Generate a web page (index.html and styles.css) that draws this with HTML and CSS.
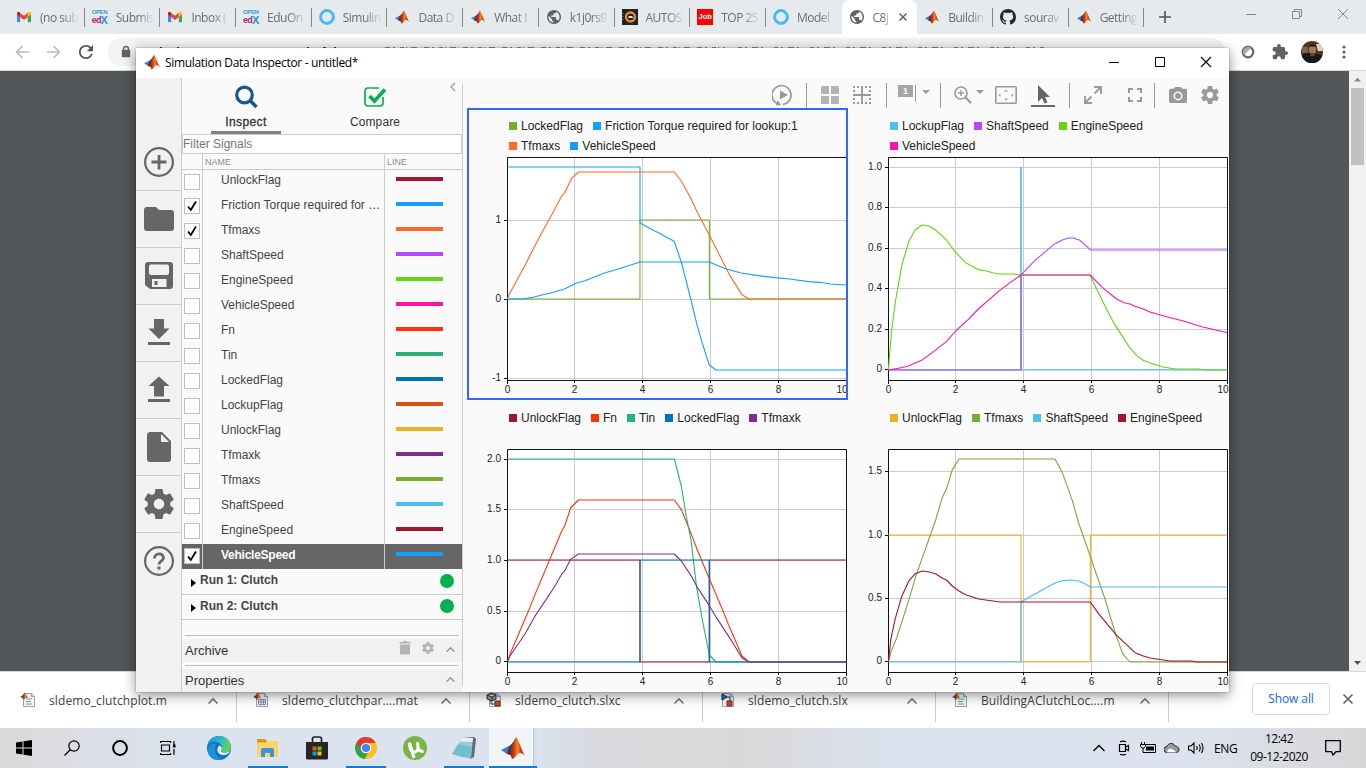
FILE: index.html
```html
<!DOCTYPE html>
<html lang="en">
<head>
<meta charset="utf-8">
<title>Simulation Data Inspector</title>
<link rel="stylesheet" href="styles.css">
</head>
<body>
<svg class="defs" width="0" height="0">
  <defs>
    <linearGradient id="flame" x1="0" x2="1"><stop offset="0" stop-color="#5a1010"/><stop offset=".35" stop-color="#c23318"/><stop offset=".6" stop-color="#f58a1f"/><stop offset=".75" stop-color="#d4401c"/><stop offset="1" stop-color="#b02010"/></linearGradient>
    <linearGradient id="edgeg" x1="0" y1="0" x2="1" y2=".4"><stop offset="0" stop-color="#1b8fd8"/><stop offset=".5" stop-color="#25b7d3"/><stop offset="1" stop-color="#5fd45a"/></linearGradient>
  </defs>
  <symbol id="matlab" viewBox="0 0 24 24"><path d="M0 14l8-4 3 3-5 5z" fill="#3f7fc0"/><path d="M8 10c3-1 5-6 7-8l-3 12-3 5-3-1z" fill="#2b3f78"/><path d="M15.500 1C13 3 12 10 6 18c3-1 4 2 5 5 4-1 5-6 8-6 2 0 3 1 5 3C21 15 18 5 15.500 1z" fill="url(#flame)"/></symbol>
  <symbol id="gmail" viewBox="0 0 24 18"><path d="M0 3v15h5.500V7z" fill="#4285f4"/><path d="M24 3v15h-5.500V7z" fill="#34a853"/><path d="M18.500 2v7L24 5V2.500C24 0 21 -1 18.500 1.500z" fill="#fbbc04"/><path d="M5.500 2v7l6.500 5 6.500-5V1.800L12 6.800z" fill="#ea4335"/><path d="M5.500 2v7L0 5V2.500C0 0 3-1 5.500 1.500z" fill="#c5221f"/></symbol>
  <symbol id="globe" viewBox="2 2 20 20"><path fill="#5f6368" d="M12 2C6.480 2 2 6.480 2 12s4.480 10 10 10 10-4.480 10-10S17.520 2 12 2zm-1 17.930c-3.950-.49-7-3.850-7-7.930 0-.62.08-1.210.21-1.790L9 15v1c0 1.100.9 2 2 2v1.930zm6.900-2.540c-.26-.81-1-1.390-1.900-1.390h-1v-3c0-.55-.45-1-1-1H8v-2h2c.55 0 1-.45 1-1V7h2c1.100 0 2-.9 2-2v-.41c2.930 1.190 5 4.060 5 7.410 0 2.080-.8 3.970-2.100 5.390z"/></symbol>
  <symbol id="ring" viewBox="0 0 16 16"><circle cx="8" cy="8" r="6.400" fill="none" stroke="#48b9f5" stroke-width="3"/></symbol>
  <symbol id="gear" viewBox="2 2 20 20"><path fill="currentColor" fill-rule="evenodd" d="M19.430 12.980c.04-.32.07-.64.07-.98s-.03-.66-.07-.98l2.110-1.650c.19-.15.24-.42.12-.64l-2-3.460c-.12-.22-.39-.3-.61-.22l-2.490 1c-.52-.4-1.080-.73-1.690-.98l-.38-2.650C14.460 2.180 14.250 2 14 2h-4c-.25 0-.46.18-.49.42l-.38 2.650c-.61.25-1.170.59-1.690.98l-2.490-1c-.23-.09-.49 0-.61.22l-2 3.460c-.13.22-.07.49.12.64l2.110 1.650c-.04.32-.07.65-.07.98s.03.66.07.98l-2.110 1.650c-.19.15-.24.42-.12.64l2 3.460c.12.22.39.3.61.22l2.490-1c.52.4 1.080.73 1.690.98l.38 2.650c.03.24.24.42.49.42h4c.25 0 .46-.18.49-.42l.38-2.650c.61-.25 1.170-.59 1.690-.98l2.490 1c.23.09.49 0 .61-.22l2-3.460c.12-.22.07-.49-.12-.64zM12 15.500c-1.930 0-3.500-1.570-3.500-3.500s1.570-3.500 3.500-3.500 3.500 1.570 3.500 3.500-1.570 3.500-3.500 3.500z"/></symbol>
  <symbol id="up" viewBox="0 0 12 8"><path d="M1.500 6.500L6 2l4.500 4.500" fill="none" stroke="currentColor" stroke-width="1.700"/></symbol>
  <symbol id="tick" viewBox="0 0 14 14"><path d="M3 7.500l2.800 3.500L11 2.500" fill="none" stroke="#000" stroke-width="1.800"/></symbol>
  <symbol id="page" viewBox="0 0 16 16"><path d="M3.500 1.500h8l3 3v10h-11z" fill="#eef4fb" stroke="#8fa5c0"/><path d="M11.500 1.500v3h3" fill="none" stroke="#8fa5c0"/></symbol>
</svg>

<div class="tabs">
  <div class="tab"><svg class="fav" viewBox="0 0 16 16"><use href="#gmail" x="1" y="2.500" width="14" height="11"/></svg><span>(no sub</span></div>
  <div class="tab"><span class="edx"><b>OPEN</b><i>ed</i><u>X</u></span><span>Submis</span></div>
  <div class="tab"><svg class="fav" viewBox="0 0 16 16"><use href="#gmail" x="1" y="2.500" width="14" height="11"/></svg><span>Inbox (</span></div>
  <div class="tab"><span class="edx"><b>OPEN</b><i>ed</i><u>X</u></span><span>EduOn</span></div>
  <div class="tab"><svg class="fav"><use href="#ring"/></svg><span>Simulin</span></div>
  <div class="tab"><svg class="fav"><use href="#matlab" x="1" y="1" width="14" height="14"/></svg><span>Data D</span></div>
  <div class="tab"><svg class="fav"><use href="#matlab" x="1" y="1" width="14" height="14"/></svg><span>What I</span></div>
  <div class="tab"><svg class="fav"><use href="#globe" x="1" y="1" width="14" height="14"/></svg><span>k1j0rs9</span></div>
  <div class="tab"><svg class="fav" viewBox="0 0 16 16"><path fill="#17252c" d="M0 0h16v16H0z"/><circle cx="8.500" cy="8" r="4.500" fill="none" stroke="#f58220" stroke-width="2.400"/><path d="M6 9l1-2h3l1.500 2z" fill="#cfe6f5"/><path d="M1 4v9" stroke="#597" stroke-dasharray="1 2"/></svg><span>AUTOS</span></div>
  <div class="tab"><span class="job">Job</span><span>TOP 25</span></div>
  <div class="tab last"><svg class="fav"><use href="#ring"/></svg><span>Model</span></div>
  <div class="tab active"><svg class="fav"><use href="#globe" x="1" y="1" width="14" height="14"/></svg><span>C8j</span><svg class="tabx" viewBox="0 0 10 10"><path d="M1.500 1.500l7 7M8.500 1.500l-7 7" stroke="#5f6368" stroke-width="1.500"/></svg></div>
  <div class="tab"><svg class="fav"><use href="#matlab" x="1" y="1" width="14" height="14"/></svg><span>Buildin</span></div>
  <div class="tab"><svg class="fav" viewBox="0 0 16 16"><path fill="#24292e" d="M8 0C3.580 0 0 3.580 0 8c0 3.540 2.290 6.530 5.470 7.590.4.07.55-.17.55-.38 0-.19-.01-.82-.01-1.490-2.010.37-2.530-.49-2.690-.94-.09-.23-.48-.94-.82-1.130-.28-.15-.68-.52-.01-.53.63-.01 1.080.58 1.230.82.72 1.210 1.870.87 2.330.66.07-.52.28-.87.51-1.070-1.780-.2-3.640-.89-3.640-3.950 0-.87.31-1.590.82-2.150-.08-.2-.36-1.020.08-2.120 0 0 .67-.21 2.200.82.64-.18 1.320-.27 2-.27s1.360.09 2 .27c1.530-1.040 2.200-.82 2.200-.82.44 1.100.16 1.920.08 2.120.51.56.82 1.270.82 2.150 0 3.070-1.870 3.750-3.650 3.950.29.25.54.73.54 1.480 0 1.070-.01 1.930-.01 2.200 0 .21.15.46.55.38A8.010 8.010 0 0 0 16 8c0-4.420-3.580-8-8-8z"/></svg><span>sourav</span></div>
  <div class="tab"><svg class="fav"><use href="#matlab" x="1" y="1" width="14" height="14"/></svg><span>Getting</span></div>
  <svg class="plus" viewBox="0 0 12 12"><path d="M6 0v12M0 6h12" stroke="#50545a" stroke-width="1.600"/></svg>
  <div class="winctl">
    <svg viewBox="0 0 12 12"><path d="M1 6.500h10" stroke="#888"/></svg>
    <svg viewBox="0 0 12 12"><path d="M1.500 3.500h7v7h-7zM3.500 3.500v-2h7v7h-2" fill="none" stroke="#888"/></svg>
    <svg viewBox="0 0 12 12"><path d="M1 1l10 10M11 1L1 11" stroke="#888"/></svg>
  </div>
</div>

<div class="nav">
  <svg class="n1" viewBox="0 0 14 14"><path d="M14 7H1.500M7.500 1L1.500 7l6 6" fill="none" stroke="#b9bbbd" stroke-width="1.700"/></svg>
  <svg class="n1" viewBox="0 0 14 14"><path d="M0 7h12.500M6.500 1l6 6-6 6" fill="none" stroke="#b9bbbd" stroke-width="1.700"/></svg>
  <svg class="n1" viewBox="4 4 16 16"><path fill="#505357" d="M17.650 6.350C16.200 4.900 14.210 4 12 4c-4.420 0-7.990 3.580-7.990 8s3.570 8 7.990 8c3.730 0 6.840-2.550 7.730-6h-2.080c-.82 2.330-3.040 4-5.650 4-3.310 0-6-2.690-6-6s2.690-6 6-6c1.660 0 3.140.69 4.220 1.780L13 11h7V4l-2.350 2.350z"/></svg>
  <div class="omni">
    <svg width="1097" height="28" viewBox="108 38 1097 28"><path d="M122.500 50.500h7v6h-7z" fill="#5f6368" stroke="#5f6368" stroke-width="1.400"/><path d="M123.500 51v-2a2.500 2.500 0 0 1 5 0v2" fill="none" stroke="#5f6368" stroke-width="1.400"/><path d="M160 47.500h2m15 0h2m128 0h2m14 0h3m8 0h2" stroke="#444"/><path d="M385 47.500h340" stroke="#888" stroke-dasharray="5 3 2 5 4 2 1 4 6 7"/><path d="M738 47.500h306" stroke="#888" stroke-dasharray="4 3 2 5 6 3 2 11"/><path d="M1208 44v4" stroke="#555" stroke-width="2"/></svg>
  </div>
  <svg class="sync" viewBox="0 0 14 14"><circle cx="7" cy="7" r="5.300" fill="none" stroke="#666" stroke-width="2.200"/><path d="M3 10l7-7a5 5 0 0 0-7 7z" fill="#aaa"/></svg>
  <svg class="ext" viewBox="1 1 22 22"><path fill="#5f6368" d="M20.500 11H19V7c0-1.100-.9-2-2-2h-4V3.500C13 2.120 11.880 1 10.500 1S8 2.120 8 3.500V5H4c-1.100 0-1.990.9-1.990 2v3.800H3.500c1.490 0 2.700 1.210 2.700 2.700s-1.210 2.700-2.700 2.700H2V20c0 1.100.9 2 2 2h3.800v-1.500c0-1.490 1.210-2.700 2.700-2.700 1.490 0 2.700 1.210 2.700 2.700V22H17c1.100 0 2-.9 2-2v-4h1.500c1.380 0 2.500-1.120 2.500-2.500S21.880 11 20.500 11z"/></svg>
  <svg class="avatar" viewBox="0 0 22 22"><clipPath id="av"><circle cx="11" cy="11" r="11"/></clipPath><g clip-path="url(#av)"><path fill="#4a3a2a" d="M0 0h22v22H0z"/><path fill="#e4d2b4" d="M15 3h7v7h-5z"/><path fill="#7d6548" d="M1 6h6v6H1z"/><path d="M3 22c0-6 4-8 8-8s9 2 9 8z" fill="#16191c"/><path d="M1 13l5-1 10 1 5 1v8H1z" fill="#16191c"/><ellipse cx="11.500" cy="8.500" rx="3.600" ry="5" fill="#a9745a"/><path d="M7.500 7c0-5 8-5 8 0l-1-1.500h-6z" fill="#1b1512"/><path d="M9.500 12h4v3h-4z" fill="#6e4434"/></g></svg>
  <svg class="dots" viewBox="0 0 4 14"><circle cx="2" cy="2" r="1.600"/><circle cx="2" cy="7" r="1.600"/><circle cx="2" cy="12" r="1.600"/></svg>
</div>

<div class="viewer"><div class="scroll"><svg viewBox="0 0 17 17"><path d="M5 10.500l3.500-4 3.500 4z" fill="#8a8a8a"/></svg><div class="thumb"></div><svg viewBox="0 0 17 17"><path d="M5 7l3.500 4L12 7z" fill="#505050"/></svg></div></div>

<div class="downloads">
  <div class="dl"><svg viewBox="0 0 16 16"><use href="#page"/><path d="M6 7h6M6 9.500h5M6 12h6" stroke="#6fae6a"/><use href="#matlab" x="0" y="0" width="8" height="8"/></svg><span>sldemo_clutchplot.m</span><svg class="chev"><use href="#up"/></svg></div>
  <div class="dl"><svg viewBox="0 0 16 16"><use href="#page"/><path d="M5.500 7.500h7v5h-7zM5.500 10h7M8 7v6M10.500 7v6" fill="none" stroke="#889"/><use href="#matlab" x="0" y="0" width="8" height="8"/></svg><span>sldemo_clutchpar....mat</span><svg class="chev"><use href="#up"/></svg></div>
  <div class="dl"><svg viewBox="0 0 16 16"><use href="#page"/><path d="M1 3l4-2 5 2v4l-4 2-5-2zM1 3l5 2 4-2M6 5v4" fill="#999" stroke="#333"/><path d="M9 9h5v5H9z" fill="#d2451e" stroke="#802a10"/><path d="M5 9v3h4" fill="none" stroke="#333"/></svg><span>sldemo_clutch.slxc</span><svg class="chev"><use href="#up"/></svg></div>
  <div class="dl"><svg viewBox="0 0 16 16"><use href="#page"/><path d="M3 2l5 3-5 3z" fill="#1f7fc0" stroke="#125"/><path d="M8 9h5v5H8z" fill="#d2451e" stroke="#802a10"/><path d="M8 5h3v4" fill="none" stroke="#333"/></svg><span>sldemo_clutch.slx</span><svg class="chev"><use href="#up"/></svg></div>
  <div class="dl"><svg viewBox="0 0 16 16"><use href="#page"/><path d="M6 7h6M6 9.500h5M6 12h6" stroke="#6fae6a"/><use href="#matlab" x="0" y="0" width="8" height="8"/></svg><span>BuildingAClutchLoc....m</span><svg class="chev"><use href="#up"/></svg></div>
  <div class="showall">Show all</div>
  <svg class="dlx" viewBox="0 0 12 12"><path d="M1.500 1.500l9 9M10.500 1.500l-9 9" stroke="#5f6368" stroke-width="1.700"/></svg>
</div>

<div class="taskbar">
  <div class="tb s"><svg viewBox="0 0 16 16"><path d="M0 2.500L6.500 1.500v6H0zM7.500 1.300L16 0v7.500H7.500zM0 8.500h6.500v6L0 13.600zM7.500 8.500H16V16l-8.500-1.300z"/></svg></div>
  <div class="tb s"><svg viewBox="0 0 16 16"><circle cx="10" cy="6" r="5.200" fill="none" stroke="#000" stroke-width="1.200"/><path d="M6.300 9.700L.5 15.500" stroke="#000" stroke-width="1.300"/></svg></div>
  <div class="tb s"><svg viewBox="0 0 16 16"><circle cx="8" cy="8" r="6.900" fill="none" stroke="#000" stroke-width="2"/></svg></div>
  <div class="tb s"><svg viewBox="0 0 16 16"><path d="M0 1.500h10.500M0 14.500h10.500M.5 1v2M.5 13v2M10.500 1v2M10.500 13v2M1.500 5h8v6h-8zM14 1v5M14 9v6" fill="none" stroke="#000" stroke-width="1.200"/><path d="M13 4.500h2.500v3H13z"/></svg></div>
  <div class="tb"><svg class="big" viewBox="0 0 24 24"><circle cx="12" cy="12" r="12" fill="#1273c4"/><path d="M.3 10C1 4 6 0 12 0c7 0 12 5 12 10.500 0 4-3 6-6.500 6-3 0-4-1.500-3.500-2.500 2-2 1-6-3-7.500C7 5 2 6 .3 10z" fill="url(#edgeg)"/><path d="M8 12c-1 5 2 10 8 11-6 3-13 0-15-6C0 12 3 7 9 8c-.5 1-1 2-1 4z" fill="#1e8fdd"/><path d="M12 9.500c3 .5 3.500 3 2 4.700-.5 1.300 1 2.500 4 2.500 2 0 3.800-1 4.800-1.700-1 3-4 4.500-7 4C11 18.500 8.500 14 12 9.500z" fill="#e5edf8"/></svg></div>
  <div class="tb run"><svg class="big" viewBox="0 0 24 24"><path d="M1 3h8l2 2v4H1z" fill="#d99a12"/><path d="M1 6.500h9l1.500-1.500H22v16H1z" fill="#fbd367"/><path d="M5 21v-7a2 2 0 0 1 2-2h9a2 2 0 0 1 2 2v7h-4v-4H9v4z" fill="#3b94d9"/></svg></div>
  <div class="tb"><svg class="big" viewBox="0 0 24 24"><path d="M7.500 7V3c0-1.500.5-2 2-2h5c1.500 0 2 .5 2 2v4" fill="none" stroke="#222" stroke-width="1.700"/><path d="M1 6h22v16a1.500 1.500 0 0 1-1.500 1.500h-19A1.500 1.500 0 0 1 1 22z" fill="#262626"/><path d="M7.500 10.500h4v4h-4z" fill="#f25022"/><path d="M12.500 10.500h4v4h-4z" fill="#7fba00"/><path d="M7.500 15.500h4v4h-4z" fill="#00a4ef"/><path d="M12.500 15.500h4v4h-4z" fill="#ffb900"/></svg></div>
  <div class="tb run"><svg class="big" viewBox="0 0 24 24"><circle cx="12" cy="12" r="11" fill="#fbc116"/><path d="M12 12L2.500 6.500a11 11 0 0 0 8 16.400l5-8.400z" fill="#2fa24c"/><path d="M12 7h9.800A11 11 0 0 0 2.500 6.500L7.600 14.500z" fill="#e33b2e"/><circle cx="12" cy="12" r="5.300" fill="#fff"/><circle cx="12" cy="12" r="4.100" fill="#4285f4"/></svg></div>
  <div class="tb"><svg class="big" viewBox="0 0 24 24"><circle cx="12" cy="12" r="12" fill="#78b544"/><path d="M6.500 6.500c0 5 1 10 5 9.500 4-.5 4-5 3-9.500 0 6 1.500 10 6 8.500M7 8l4 14" fill="none" stroke="#fff" stroke-width="3"/></svg></div>
  <div class="tb run"><svg class="big" viewBox="0 0 24 24"><path d="M10 2l12-1 2 2-2 18-4 2z" fill="#6b6a60"/><path d="M10 2h11l-2 20-9-1-10-3z" fill="#8fd0dd"/><path d="M10 2h11l-.5 4-12.500-.5z" fill="#e3f1f4"/><path d="M6 8l14 3-1 11-9-1-10-3z" fill="#5fb2c6" opacity=".6"/></svg></div>
  <div class="tb run on"><svg class="big"><use href="#matlab"/></svg></div>
  <div class="tray">
    <svg viewBox="0 0 12 8"><path d="M.5 7L6 1.500 11.500 7" fill="none" stroke="#000" stroke-width="1.300"/></svg>
    <svg viewBox="0 0 14 16"><path d="M2.500 4.500h6v7h-6zM8.500 7l3-1.500v5l-3-1.500zM3 1.800q3-1.500 6 0M3 14.200q3 1.500 6 0" fill="none" stroke="#000" stroke-width="1.200"/></svg>
    <svg viewBox="0 0 16 16"><path d="M6 6.500h8v4H6z"/><path d="M5 4.500h10.500v8H5M1.500 2v2.500M4.500 2v2.500M.500 4.500h5v2l-1.500 1.500h-2L.5 6.500zM3 8v4.500h2" fill="none" stroke="#000"/></svg>
    <svg viewBox="0 0 16 16"><path d="M3 12.500a3 3 0 0 1 0-6C4 3 9 2 11 6c4 0 5.500 5 2 6.500z" fill="#999" stroke="#222"/><path d="M3 12.500c0-4 5-5 7-2l3 2z" fill="#fff"/></svg>
    <svg viewBox="0 0 16 16"><path d="M.5 6h2.500l3-3v10l-3-3H.5zM8.500 6q1.500 2 0 4M11 4.500q2.500 3.500 0 7M13.500 3q3 5 0 10" fill="none" stroke="#000" stroke-width="1.100"/></svg>
    <span class="eng">ENG</span>
    <span class="clock"><span>12:42</span><span>09-12-2020</span></span>
    <svg class="note" viewBox="0 0 16 16"><path d="M.7.7h14.600v11H11L8 15l-1.500-3.300H.7z" fill="none" stroke="#000" stroke-width="1.300"/></svg>
  </div>
</div>

<div class="window">
  <div class="title"><svg class="ico"><use href="#matlab"/></svg><span>Simulation Data Inspector - untitled*</span>
    <div class="ctl"><svg viewBox="0 0 12 12"><path d="M1 6.500h10" stroke="#000"/></svg><svg viewBox="0 0 12 12"><path d="M1.500 1.500h9v9h-9z" fill="none" stroke="#000"/></svg><svg viewBox="0 0 12 12"><path d="M1 1l10 10M11 1L1 11" stroke="#000" stroke-width="1.100"/></svg></div>
  </div>
  <div class="body">
    <div class="rail">
      <div><svg viewBox="0 0 30 30"><circle cx="15" cy="15" r="13.900" fill="none" stroke="currentColor" stroke-width="2.200"/><path d="M15 8v14.500M7.500 15h15" stroke="currentColor" stroke-width="2.800"/></svg></div>
      <div><svg viewBox="0 0 30 30"><path d="M3 3h9l3 3h12a3 3 0 0 1 3 3v15a3 3 0 0 1-3 3H3a3 3 0 0 1-3-3V6a3 3 0 0 1 3-3z" fill="currentColor"/></svg></div>
      <div><svg viewBox="0 0 30 30"><path fill="currentColor" fill-rule="evenodd" d="M4 1h22a3 3 0 0 1 3 3v21a3 3 0 0 1-3 3H6l-5-4V4a3 3 0 0 1 3-3zM7 3.500a2 2 0 0 0-2 2V12a2 2 0 0 0 2 2h16a2 2 0 0 0 2-2V5.500a2 2 0 0 0-2-2zM8 18v8h14.500v-8zM10.500 20h3v4h-3z"/></svg></div>
      <div><svg viewBox="0 0 30 30"><path fill="currentColor" d="M10 1h10v9.500h5.500L15 21 4.500 10.500H10zM4 24h22v3H4z"/></svg></div>
      <div><svg viewBox="0 0 30 30"><path fill="currentColor" d="M10 21.500h10V11h5.500L15 1.500 4.500 11H10zM4 24h22v3H4z"/></svg></div>
      <div><svg viewBox="0 0 30 30"><path fill="currentColor" fill-rule="evenodd" d="M5.500 0H18l9 9v18a3 3 0 0 1-3 3H6a3 3 0 0 1-3-3V3a3 3 0 0 1 2.500-3zM17 2v8h8z"/></svg></div>
      <div><svg class="lg"><use href="#gear"/></svg></div>
      <div class="help"><svg viewBox="0 0 30 30"><circle cx="15" cy="15" r="13.900" fill="none" stroke="currentColor" stroke-width="2.200"/><path d="M10.500 12.500c0-6 9-6 9-.8 0 3-4.500 3.300-4.500 6.800" fill="none" stroke="currentColor" stroke-width="2.800"/><path d="M13.500 20.500h3v3h-3z" fill="currentColor"/></svg></div>
    </div>

    <div class="panel">
      <div class="modes">
        <div class="mode sel"><svg viewBox="0 0 24 24"><circle cx="10.500" cy="10" r="7.800" fill="none" stroke="#165a8c" stroke-width="3.200"/><path d="M16 15.500l6.500 6.500" stroke="#165a8c" stroke-width="3.600"/></svg><span>Inspect</span></div>
        <div class="mode"><svg viewBox="0 0 24 24"><path d="M20 12v6a3 3 0 0 1-3 3H5a3 3 0 0 1-3-3V6a3 3 0 0 1 3-3h11" fill="none" stroke="#0aaf54" stroke-width="1.700"/><path d="M6.500 11l5 5L22 4.500" fill="none" stroke="#0aaf54" stroke-width="3.700"/></svg><span>Compare</span></div>
        <svg class="fold" viewBox="0 0 6 10"><path d="M5 1L1 5l4 4" fill="none" stroke="#999" stroke-width="1.300"/></svg>
      </div>
      <div class="filter">Filter Signals</div>
      <div class="head"><span></span><span>NAME</span><span>LINE</span></div>
      <div class="row first"><span><i></i></span><span>UnlockFlag</span><span><b class="c-mar"></b></span></div>
      <div class="row"><span><i><svg><use href="#tick"/></svg></i></span><span>Friction Torque required for …</span><span><b class="c-blu"></b></span></div>
      <div class="row"><span><i><svg><use href="#tick"/></svg></i></span><span>Tfmaxs</span><span><b class="c-ora"></b></span></div>
      <div class="row"><span><i></i></span><span>ShaftSpeed</span><span><b class="c-vio"></b></span></div>
      <div class="row"><span><i></i></span><span>EngineSpeed</span><span><b class="c-lim"></b></span></div>
      <div class="row"><span><i></i></span><span>VehicleSpeed</span><span><b class="c-pin"></b></span></div>
      <div class="row"><span><i></i></span><span>Fn</span><span><b class="c-red"></b></span></div>
      <div class="row"><span><i></i></span><span>Tin</span><span><b class="c-tea"></b></span></div>
      <div class="row"><span><i></i></span><span>LockedFlag</span><span><b class="c-nav"></b></span></div>
      <div class="row"><span><i></i></span><span>LockupFlag</span><span><b class="c-rus"></b></span></div>
      <div class="row"><span><i></i></span><span>UnlockFlag</span><span><b class="c-yel"></b></span></div>
      <div class="row"><span><i></i></span><span>Tfmaxk</span><span><b class="c-pur"></b></span></div>
      <div class="row"><span><i></i></span><span>Tfmaxs</span><span><b class="c-gre"></b></span></div>
      <div class="row"><span><i></i></span><span>ShaftSpeed</span><span><b class="c-sky"></b></span></div>
      <div class="row"><span><i></i></span><span>EngineSpeed</span><span><b class="c-mar"></b></span></div>
      <div class="row hot"><span><i><svg><use href="#tick"/></svg></i></span><span>VehicleSpeed</span><span><b class="c-blu"></b></span></div>
      <div class="runrow r1"><svg viewBox="0 0 5 8"><path d="M0 0l5 4-5 4z"/></svg><span>Run 1: Clutch</span><i></i></div>
      <div class="runrow"><svg viewBox="0 0 5 8"><path d="M0 0l5 4-5 4z"/></svg><span>Run 2: Clutch</span><i></i></div>
      <div class="rule"></div>
      <div class="sect"><span>Archive</span><svg viewBox="0 0 12 14"><path d="M1 3.500h10V12a1.500 1.500 0 0 1-1.500 1.500h-7A1.500 1.500 0 0 1 1 12zM.5 1h3l1-1h3l1 1h3v1.500H.5z" fill="#b3b3b3"/></svg><svg class="g"><use href="#gear"/></svg><svg class="u"><use href="#up"/></svg></div>
      <div class="rule two"></div>
      <div class="sect"><span>Properties</span><svg class="u"><use href="#up"/></svg></div>
    </div>

    <div class="main">
      <div class="vline"></div>
      <div class="tools">
        <svg width="22" height="22" viewBox="0 0 22 22"><path d="M5 19.500A9.500 9.500 0 1 1 11 20.500" fill="none" stroke="currentColor" stroke-width="1.700"/><path d="M8 6.500l8 4.500-8 4.500zM4 21.500l5-.5-3.500-5z" fill="currentColor"/></svg>
        <i class="sep"></i>
        <svg width="18" height="18" viewBox="0 0 18 18"><path d="M1 0h7v8H0V1zM10 0h7l1 1v7h-8zM0 10h8v8H1l-1-1zM10 10h8v7l-1 1h-7z" fill="#b3b3b3"/></svg>
        <svg width="18" height="18" viewBox="0 0 18 18"><path d="M9 0v18M0 9h18" stroke="currentColor" stroke-width="1.800"/><path d="M0 1h18M0 17h18M1 0v18M17 0v18" stroke="currentColor" stroke-width="2" stroke-dasharray="2 2"/></svg>
        <i class="sep"></i>
        <span class="one"><b>1</b><i></i></span>
        <svg class="car" width="8" height="4" viewBox="0 0 8 4"><path d="M0 0h8L4 4z" fill="currentColor"/></svg>
        <i class="sep"></i>
        <svg width="18" height="18" viewBox="0 0 18 18"><circle cx="7" cy="7" r="6" fill="none" stroke="currentColor" stroke-width="1.700"/><path d="M11.500 11.500L17 17" stroke="currentColor" stroke-width="2.200"/><path d="M7 4v6M4 7h6" stroke="currentColor" stroke-width="1.400"/></svg>
        <svg class="car" width="8" height="4" viewBox="0 0 8 4"><path d="M0 0h8L4 4z" fill="currentColor"/></svg>
        <svg width="22" height="18" viewBox="0 0 22 18"><rect x=".8" y=".8" width="20.400" height="16.400" rx="1" fill="none" stroke="currentColor" stroke-width="1.600"/><path d="M9 5.500l2-2 2 2zM9 12.500l2 2 2-2zM5.500 7.500L3.500 9l2 2zM16.500 7.500l2 1.500-2 2z" fill="currentColor"/></svg>
        <svg class="cur" width="24" height="22" viewBox="0 0 24 22"><path d="M7 0v17l4-4 2.500 5.500 3-1.200-2.500-5.300h5z" fill="#666"/><path d="M0 20h24v2H0z" fill="#666"/></svg>
        <i class="sep"></i>
        <svg width="18" height="18" viewBox="0 0 18 18"><path d="M10.500 7.500L16 2M7.500 10.500L2 16M10 1h7v7M1 10v7h7" fill="none" stroke="currentColor" stroke-width="1.900"/></svg>
        <svg width="14" height="14" viewBox="0 0 14 14"><path d="M1 5V1h4M9 1h4v4M13 9v4H9M5 13H1V9" fill="none" stroke="currentColor" stroke-width="2"/></svg>
        <i class="sep"></i>
        <svg width="18" height="18" viewBox="2 2 20 20"><path fill="currentColor" fill-rule="evenodd" d="M9 3L7.200 5H4c-1.100 0-2 .9-2 2v12c0 1.100.9 2 2 2h16c1.100 0 2-.9 2-2V7c0-1.100-.9-2-2-2h-3.200L15 3zM12 18a5 5 0 1 1 0-10 5 5 0 0 1 0 10z"/><circle cx="12" cy="13" r="3.200" fill="currentColor"/></svg>
        <svg width="18" height="18"><use href="#gear"/></svg>
      </div>
      <div class="charts">
        <div class="chart pick">
          <div class="legend"><span><i class="c-gre"></i>LockedFlag</span><span><i class="c-blu"></i>Friction Torque required for lookup:1</span><span class="br"></span><span><i class="c-ora"></i>Tfmaxs</span><span><i class="c-blu"></i>VehicleSpeed</span></div>
          <svg class="plot" viewBox="467 156 381 244">
            <path class="bg" d="M507.500 157.500h339v223h-339z"/>
            <path class="grid" d="M574.500 158v222M642.500 158v222M710.500 158v222M778.500 158v222M508 220.500h338M508 299.500h338M508 378.500h338"/>
            <path class="frame" d="M507.500 157.500h339v223h-339zM504 220.500h3M504 299.500h3M504 378.500h3M507.500 380v4M574.500 380v3M642.500 380v3M710.500 380v3M778.500 380v3"/>
            <g class="lines" transform="translate(465 105) scale(.33333)">
              <path class="s-gre" d="M127 582H525V345H733V582H1144"/>
              <path class="s-blu" d="M127 186H525V354L565 376 588 387 608 399 627 408 649 471 664 530 678 585 695 655 712 715 733 780 753 795H1144"/>
              <path class="s-ora" d="M127 582L136 562 178 485 208 425 240 366 268 315 290 273 300 262 319 221 340 201H628L649 228 675 275 697 322 733 390 770 463 795 512 831 569 852 582H1144"/>
              <path class="s-blu" d="M127 582H170L205 577 230 570 255 565 300 551 335 534 360 527 418 504 450 495 525 471H733L777 490 828 504 880 512 930 518 975 522 1030 530 1065 532 1095 537 1144 540"/>
            </g>
            <g class="ylab"><text x="501" y="223">1</text><text x="501" y="302">0</text><text x="501" y="381">-1</text></g>
            <g class="xlab"><text x="507.500" y="393">0</text><text x="574.500" y="393">2</text><text x="642.500" y="393">4</text><text x="710.500" y="393">6</text><text x="778.500" y="393">8</text><text x="842" y="393">10</text></g>
          </svg>
        </div>
        <div class="chart">
          <div class="legend"><span><i class="c-sky"></i>LockupFlag</span><span><i class="c-vio"></i>ShaftSpeed</span><span><i class="c-lim"></i>EngineSpeed</span><span class="br"></span><span><i class="c-pin"></i>VehicleSpeed</span></div>
          <svg class="plot" viewBox="848 156 381 244">
            <path class="bg" d="M888.500 157.500h339v223h-339z"/>
            <path class="grid" d="M955.500 158v222M1023.500 158v222M1091.500 158v222M1159.500 158v222M889 167.500h338M889 207.500h338M889 248.500h338M889 288.500h338M889 329.500h338M889 369.500h338"/>
            <path class="frame" d="M888.500 157.500h339v223h-339zM885 167.500h3M885 207.500h3M885 248.500h3M885 288.500h3M885 329.500h3M885 369.500h3M888.500 380v4M955.500 380v3M1023.500 380v3M1091.500 380v3M1159.500 380v3M1227.500 380v4"/>
            <g class="lines" transform="translate(855 105) scale(.33333)">
              <path class="s-sky wide" d="M498 795V186"/>
              <path class="s-sky" d="M100 795H1117"/>
              <path class="s-vio" d="M100 795H498V510L540 466 600 416 622 405 640 399H655L675 406 707 435H1117"/>
              <path class="s-lim" d="M100 795L110 675 122 585 141 478 162 408 180 375 202 360 222 363 243 376 274 405 300 440 332 473 371 494 395 498 415 504 435 507H475L498 510H705L745 593 777 655 822 725 845 752 863 765 885 774 925 786 960 792H1030L1050 795H1117"/>
              <path class="s-pin" d="M100 795L125 791 160 783 203 764 240 737 274 710 302 678 340 643 370 612 430 560 465 533 498 510H705L745 550 785 582 808 593 825 597 840 604 863 611 885 621 935 635 985 648 1040 665 1117 683"/>
            </g>
            <g class="ylab"><text x="882" y="170">1.0</text><text x="882" y="210">0.8</text><text x="882" y="251">0.6</text><text x="882" y="291">0.4</text><text x="882" y="332">0.2</text><text x="882" y="372">0</text></g>
            <g class="xlab"><text x="888.500" y="393">0</text><text x="955.500" y="393">2</text><text x="1023.500" y="393">4</text><text x="1091.500" y="393">6</text><text x="1159.500" y="393">8</text><text x="1223" y="393">10</text></g>
          </svg>
        </div>
        <div class="chart">
          <div class="legend"><span><i class="c-mar"></i>UnlockFlag</span><span><i class="c-red"></i>Fn</span><span><i class="c-tea"></i>Tin</span><span><i class="c-nav"></i>LockedFlag</span><span><i class="c-pur"></i>Tfmaxk</span></div>
          <svg class="plot" viewBox="467 448 381 244">
            <path class="bg" d="M507.500 449.500h339v223h-339z"/>
            <path class="grid" d="M574.500 450v222M642.500 450v222M710.500 450v222M778.500 450v222M508 459.500h338M508 509.500h338M508 560.500h338M508 611.500h338M508 661.500h338"/>
            <path class="frame" d="M507.500 449.500h339v223h-339zM504 459.500h3M504 509.500h3M504 560.500h3M504 611.500h3M504 661.500h3M507.500 672v4M574.500 672v3M642.500 672v3M710.500 672v3M778.500 672v3M846.500 672v4"/>
            <g class="lines" transform="translate(465 400) scale(.33333)">
              <path class="s-mar" d="M127 480H525V786H733V480H1144"/>
              <path class="s-red" d="M127 786L135 763 190 634 209 586 270 441 289 396 300 375 317 324 340 300H628L649 329 678 400 697 450 733 536 775 635 795 685 831 768 852 786H1144"/>
              <path class="s-tea" d="M127 177H628L649 258 664 350 678 420 695 563 712 660 727 735 733 765 753 786H1144"/>
              <path class="s-nav" d="M127 786H525V480H733V786H1144"/>
              <path class="s-pur" d="M127 786L135 768 180 702 209 650 270 558 289 524 300 511 317 478 340 462H628L649 483 680 530 697 562 733 617 750 646 795 715 831 774 852 786H1144"/>
            </g>
            <g class="ylab"><text x="501" y="462">2.0</text><text x="501" y="512">1.5</text><text x="501" y="563">1.0</text><text x="501" y="614">0.5</text><text x="501" y="664">0</text></g>
            <g class="xlab"><text x="507.500" y="685">0</text><text x="574.500" y="685">2</text><text x="642.500" y="685">4</text><text x="710.500" y="685">6</text><text x="778.500" y="685">8</text><text x="842" y="685">10</text></g>
          </svg>
        </div>
        <div class="chart">
          <div class="legend"><span><i class="c-yel"></i>UnlockFlag</span><span><i class="c-gre"></i>Tfmaxs</span><span><i class="c-sky"></i>ShaftSpeed</span><span><i class="c-mar"></i>EngineSpeed</span></div>
          <svg class="plot" viewBox="848 448 381 244">
            <path class="bg" d="M888.500 449.500h339v223h-339z"/>
            <path class="grid" d="M955.500 450v222M1023.500 450v222M1091.500 450v222M1159.500 450v222M889 471.500h338M889 535.500h338M889 598.500h338M889 661.500h338"/>
            <path class="frame" d="M888.500 449.500h339v223h-339zM885 471.500h3M885 535.500h3M885 598.500h3M885 661.500h3M888.500 672v4M955.500 672v3M1023.500 672v3M1091.500 672v3M1159.500 672v3M1227.500 672v4"/>
            <g class="lines" transform="translate(855 400) scale(.33333)">
              <path class="s-yel" d="M100 405H498V786H706V405H1117"/>
              <path class="s-gre" d="M100 786L110 750 125 714 160 605 182 530 242 360 262 292 274 268 292 209 312 177H600L622 218 652 302 670 366 706 470 750 597 782 703 804 763 825 786H1117"/>
              <path class="s-sky" d="M100 786H498V606L540 582 600 549 622 542 650 540 672 543 690 551 706 561H1117"/>
              <path class="s-mar" d="M100 786L108 715 121 655 141 587 162 542 181 521 202 513 222 516 243 522 260 533 274 540 292 558 312 573 332 584 371 597 435 606H706L730 640 785 706 840 758 865 768 885 774 945 783H1010L1025 786H1117"/>
            </g>
            <g class="ylab"><text x="882" y="474">1.5</text><text x="882" y="538">1.0</text><text x="882" y="601">0.5</text><text x="882" y="664">0</text></g>
            <g class="xlab"><text x="888.500" y="685">0</text><text x="955.500" y="685">2</text><text x="1023.500" y="685">4</text><text x="1091.500" y="685">6</text><text x="1159.500" y="685">8</text><text x="1223" y="685">10</text></g>
          </svg>
        </div>
      </div>
    </div>
  </div>
</div>
</body>
</html>
```
FILE: styles.css
```css
* { box-sizing: border-box; }
body { margin: 0; width: 1366px; height: 768px; overflow: hidden; position: relative; display: flex; flex-direction: column; font-family: "Open Sans", "Noto Sans", sans-serif; font-size: 12px; }
svg { display: block; flex: none; }
.defs { position: absolute; }

/* browser */
.tabs { height: 34px; background: #e6eaed; display: flex; align-items: center; padding-left: 9px; flex: none; }
.tab { width: 75.700px; height: 34px; flex: none; display: flex; align-items: center; padding-left: 7px; color: #6a6e73; font-size: 12px; letter-spacing: -.5px; background: linear-gradient(#85898d, #85898d) right 8px / 1px 19px no-repeat; }
.tab > span:last-of-type { width: 40px; overflow: hidden; white-space: nowrap; -webkit-mask-image: linear-gradient(90deg, #000 55%, transparent 97%); mask-image: linear-gradient(90deg, #000 55%, transparent 97%); }
.tab.last { background: none; }
.tab.active { background: #fff; border-radius: 8px 8px 0 0; }
.tab.active > span:last-of-type { width: 19px; }
.tabx { width: 10px; height: 10px; margin-left: 6px; }
.fav { width: 16px; height: 16px; margin-right: 8px; }
.edx { width: 16px; height: 16px; margin-right: 8px; display: flex; flex-wrap: wrap; line-height: 8px; letter-spacing: -.4px; }
.edx b { width: 16px; font: bold 6px/6px "Liberation Sans", sans-serif; color: #2f9fd0; letter-spacing: -.4px; white-space: nowrap; }
.edx i { font: bold 9px/9px "Liberation Sans", sans-serif; color: #b0246a; letter-spacing: -.8px; }
.edx u { font: bold 11px/9px "Liberation Sans", sans-serif; color: #1795d4; text-decoration: none; }
.job { width: 16px; height: 16px; margin-right: 8px; background: #f00; color: #fff; font: bold 7.500px/16px "Liberation Sans", sans-serif; text-align: center; letter-spacing: 0; }
.plus { width: 12px; height: 12px; margin-left: 15px; }
.winctl { margin-left: auto; display: flex; gap: 34px; padding-right: 17px; margin-top: -6px; }
.winctl svg { width: 12px; height: 12px; }
.nav { height: 37px; background: #fff; border-bottom: 1px solid #d5d5d5; display: flex; align-items: center; padding-left: 15px; flex: none; }
.n1 { width: 14px; height: 14px; margin-right: 18px; }
.n1 + .n1 + .n1 { margin-right: 15px; }
.omni { width: 1117px; height: 28px; border-radius: 14px; background: #f1f3f4; overflow: hidden; flex: none; }
.sync { width: 14px; height: 14px; margin-left: 16px; }
.ext { width: 16px; height: 16px; margin-left: 17px; }
.avatar { width: 22px; height: 22px; margin-left: 13px; }
.dots { width: 4px; height: 14px; margin-left: 19px; fill: #5f6368; }
.viewer { height: 600px; background: #525659; display: flex; justify-content: flex-end; flex: none; }
.scroll { width: 17px; background: #f1f1f1; display: flex; flex-direction: column; }
.scroll svg { width: 17px; height: 17px; }
.thumb { width: 13px; height: 77px; background: #c1c1c1; margin: 0 auto auto 2px; }

.downloads { height: 57px; background: #fff; border-top: 1px solid #d8d8d8; display: flex; align-items: center; padding-left: 4px; flex: none; }
.dl { width: 233px; height: 41px; margin-top: 2px; border-right: 1px solid #ccc; display: flex; align-items: center; padding-left: 16px; color: #3c4043; font-size: 12px; letter-spacing: .1px; }
.dl span { margin-top: -1px; }
.dl svg { width: 16px; height: 16px; margin-right: 13px; margin-top: -2px; }
.dl .chev { width: 12px; height: 8px; margin: 0 17px 0 auto; color: #74787c; }
.showall { width: 78px; height: 32px; margin-left: 83px; margin-top: -2px; border: 1px solid #d9dbde; border-radius: 4px; color: #1a66e0; text-align: center; line-height: 30px; font-size: 12px; font-weight: 500; letter-spacing: -.1px; }
.dlx { width: 12px; height: 12px; margin-left: 12px; margin-top: -2px; }

.taskbar { height: 40px; display: flex; align-items: stretch; background: linear-gradient(90deg, #d9d9d9 0, #dbdee4 80px, #dbe3f0 220px, #dbe3f0 530px, #d7d9dc 600px, #d8d8d8 740px, #dbe2ee 900px, #dce3ef 1180px, #d8d9dc 1330px, #d6d6d6 1366px); flex: none; }
.tb { width: 49px; display: flex; align-items: center; justify-content: center; }
.tb.s { width: 48px; }
.tb:nth-child(5) { margin-left: 2px; }
.tb svg { width: 16px; height: 16px; }
.tb .big { width: 24px; height: 24px; }
.run { background: linear-gradient(#0f7bd8, #0f7bd8) center bottom / 40px 2px no-repeat; }
.run.on { background: linear-gradient(#0f7bd8, #0f7bd8) 1px bottom / 48px 2px no-repeat, linear-gradient(90deg, transparent 1px, #f1f5fa 1px, #f1f5fa 45px, #bcc8d8 45px, #bcc8d8 46px, #d3deec 46px); }
.tray { margin-left: auto; display: flex; align-items: center; padding-right: 25px; }
.tray svg { width: 16px; height: 16px; margin-right: 8px; }
.tray svg:first-child { width: 12px; height: 8px; margin-right: 11px; }
.eng { width: 24px; margin-left: 2px; font-size: 12px; letter-spacing: -.4px; }
.clock { width: 60px; margin: 0 16px 0 11px; display: flex; flex-direction: column; text-align: center; font-size: 12px; line-height: 18px; letter-spacing: -.5px; }
.tray .note { margin: 0; }

/* inspector window */
.window { position: absolute; left: 136px; top: 48px; width: 1093px; height: 644px; background: #fafafa; box-shadow: 0 0 1px rgba(0,0,0,.5), 0 3px 12px rgba(0,0,0,.45); display: flex; flex-direction: column; font-family: "Liberation Sans", Arial, sans-serif; }
.title { height: 30px; background: #fff; display: flex; align-items: center; padding: 0 0 2px 8px; font-family: "Open Sans", sans-serif; font-size: 12px; letter-spacing: -.32px; color: #000; }
.ico { width: 16px; height: 16px; margin-right: 5px; }
.ctl { margin-left: auto; display: flex; gap: 34px; padding-right: 17px; }
.ctl svg { width: 12px; height: 12px; }
.body { flex: 1; display: flex; }
.rail { width: 46px; padding-top: 56px; background: #f1f1f1; border-right: 1px solid #ccc; color: #666; }
.rail div { height: 57px; display: flex; align-items: center; justify-content: center; border-bottom: 1px solid #ccc; }
.rail .help { border-color: transparent; }
.rail svg { width: 30px; height: 30px; }

.panel { width: 280px; }
.modes { height: 56px; display: flex; position: relative; }
.mode { width: 70px; margin-left: 29px; height: 56px; padding-top: 7px; display: flex; flex-direction: column; align-items: center; font-size: 12px; color: #333; }
.mode + .mode { margin-left: 59px; }
.mode svg { width: 24px; height: 24px; }
.mode span { line-height: 14px; margin-top: 6px; letter-spacing: .1px; }
.mode.sel { border-bottom: 3px solid #808080; }
.mode.sel span { -webkit-text-stroke: .3px #333; letter-spacing: .4px; }
.fold { position: absolute; right: 6px; top: 4px; width: 6px; height: 10px; }
.filter { height: 20px; border: 1px solid #ccc; background: #fff; font-size: 12px; line-height: 18px; color: #757575; }
.head, .row { display: grid; grid-template-columns: 21px 182px 77px; }
.head { height: 16px; border-bottom: 1px solid #ccc; font-size: 9px; line-height: 16px; color: #8a8a8a; }
.head span, .row > span { border-right: 1px solid #ccc; padding-left: 2px; }
.head span:last-child, .row > span:last-child { border: 0; }
.row { height: 25px; font-size: 12px; color: #444; background: #fafafa; }
.row.first { height: 24px; }
.row > span:nth-child(2) { padding-left: 18px; line-height: 22px; }
.row.first > span:nth-child(2) { line-height: 20px; }
.row i { display: block; width: 16px; height: 16px; margin-top: 4px; border: 1px solid #bfbfbf; background: #fff; }
.row i svg { width: 14px; height: 14px; }
.row > span:last-child { padding: 8px 0 0 11px; }
.row.first > span:last-child { padding-top: 7px; }
.row b { display: block; width: 47px; height: 4px; }
.row.hot { background: #666; color: #fff; font-weight: bold; letter-spacing: -.25px; }
.runrow { height: 25px; border-bottom: 1px solid #ccc; display: flex; align-items: center; font-size: 12px; font-weight: bold; color: #444; padding: 0 8px 2px; }
.runrow.r1 { height: 26px; }
.runrow svg { width: 5px; height: 8px; margin: 4px 4px 0 1px; }
.runrow span { line-height: 22px; padding-bottom: 1px; }
.runrow i { width: 14px; height: 14px; border-radius: 7px; background: #00b050; margin-left: auto; }
.rule { height: 1px; background: #bbb; margin: 15px 3px 3px; }
.rule.two { margin: 3px 3px 3px; }
.sect { height: 23px; background: #f1f1f1; display: flex; align-items: center; padding: 0 6px 0 3px; font-size: 13px; color: #333; }
.sect span { margin-right: auto; }
.sect svg { width: 12px; height: 14px; margin-right: 11px; margin-top: -5px; }
.sect .g { width: 12px; height: 12px; color: #b3b3b3; }
.sect .u { width: 11px; height: 7px; margin: -3px 0 0; color: #999; }

.main { flex: 1; display: flex; flex-direction: column; position: relative; }
.vline { position: absolute; left: 0; top: 6px; width: 1px; height: 602px; background: #ccc; }
.tools { height: 30px; padding-left: 1px; display: grid; grid-template-columns: 331px 13px 32px 32px 16px 29px 14px 11px 31px 12px 33px 38px 15px 32px 40px 13px 32px 32px; justify-items: end; align-items: center; color: #999; padding-top: 3px; }
.sep { width: 1px; height: 25px; background: #999; align-self: start; margin-top: 2px; }
.one { display: flex; align-self: start; margin-top: 4px; }
.one b { width: 15px; height: 12px; background: #a6a6a6; color: #fff; font-size: 9px; line-height: 12px; text-align: center; }
.one i { width: 1px; height: 17px; margin-left: 2px; background: #999; }
.car { margin-bottom: 5px; }
.cur { align-self: start; margin-top: 4px; }
.charts { flex: 1; display: grid; grid-template-columns: 381px 381px; grid-template-rows: 292px 292px; padding-left: 5px; }
.chart { overflow: hidden; }
.pick { position: relative; }
.pick::after { content: ""; position: absolute; inset: 0; border: 2px solid #36f; }
.legend { height: 48px; padding: 8px 0 0 42px; display: flex; flex-wrap: wrap; align-content: flex-start; column-gap: 10px; font-size: 12px; line-height: 20px; color: #222; }
.legend span { display: flex; align-items: center; height: 20px; white-space: nowrap; }
.legend i { width: 8px; height: 8px; margin-right: 4px; }
.legend .br { width: 100%; height: 0; }
.plot { width: 381px; height: 244px; }
.bg { fill: #fff; }
.grid { stroke: #ccc; fill: none; }
.frame { stroke: #111; fill: none; }
.lines path { fill: none; stroke-width: 3.300; stroke-linejoin: round; }
.lines .wide { stroke-width: 5; }
.xlab, .ylab { font-size: 10px; fill: #222; }
.xlab { text-anchor: middle; }
.ylab { text-anchor: end; }
.s-gre { stroke: #77ac30; } .s-blu { stroke: #139fff; } .s-ora { stroke: #ff6929; } .s-sky { stroke: #4dbeee; }
.s-vio { stroke: #b746ff; } .s-lim { stroke: #64d413; } .s-pin { stroke: #ff13a6; } .s-mar { stroke: #a2142f; }
.s-red { stroke: #fe330a; } .s-tea { stroke: #22b573; } .s-nav { stroke: #0072bd; } .s-pur { stroke: #7e2f8e; } .s-yel { stroke: #edb120; }
.c-gre { background: #77ac30; } .c-blu { background: #139fff; } .c-ora { background: #ff6929; } .c-sky { background: #4dbeee; }
.c-vio { background: #b746ff; } .c-lim { background: #64d413; } .c-pin { background: #ff13a6; } .c-mar { background: #a2142f; }
.c-red { background: #fe330a; } .c-tea { background: #22b573; } .c-nav { background: #0072bd; } .c-pur { background: #7e2f8e; }
.c-yel { background: #edb120; } .c-rus { background: #d95319; }
```
